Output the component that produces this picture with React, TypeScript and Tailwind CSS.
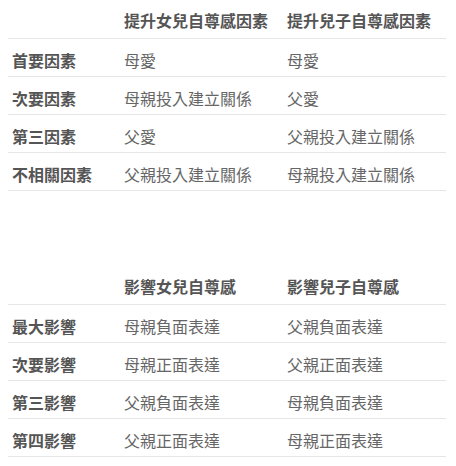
const tables = [
  {
    head: ["提升女兒自尊感因素", "提升兒子自尊感因素"],
    rows: [
      ["首要因素", "母愛", "母愛"],
      ["次要因素", "母親投入建立關係", "父愛"],
      ["第三因素", "父愛", "父親投入建立關係"],
      ["不相關因素", "父親投入建立關係", "母親投入建立關係"],
    ],
  },
  {
    head: ["影響女兒自尊感", "影響兒子自尊感"],
    rows: [
      ["最大影響", "母親負面表達", "父親負面表達"],
      ["次要影響", "母親正面表達", "父親正面表達"],
      ["第三影響", "父親負面表達", "母親負面表達"],
      ["第四影響", "父親正面表達", "母親正面表達"],
    ],
  },
];

function Table({ head, rows }: { head: string[]; rows: string[][] }) {
  return (
    <div className="w-[438px]">
      <div className="grid h-[39px] grid-cols-[112px_163px_163px] items-center border-b border-[#e6e6e6] pt-px font-bold text-[#555]">
        <div />
        {head.map((h) => (
          <div key={h} className="px-1">
            {h}
          </div>
        ))}
      </div>
      {rows.map((r) => (
        <div
          key={r[0]}
          className="grid h-[38px] grid-cols-[112px_163px_163px] items-center border-b border-[#e6e6e6] pt-[5px]"
        >
          <div className="px-1 font-bold text-[#555]">{r[0]}</div>
          <div className="px-1 text-[#666]">{r[1]}</div>
          <div className="px-1 text-[#666]">{r[2]}</div>
        </div>
      ))}
    </div>
  );
}

export default function App() {
  return (
    <div
      className="bg-white pl-2 text-[16px] leading-none"
      style={{ fontFamily: '"Noto Sans CJK TC", "Noto Sans", sans-serif' }}
    >
      <Table {...tables[0]} />
      <div className="h-[75px]" />
      <Table {...tables[1]} />
    </div>
  );
}
